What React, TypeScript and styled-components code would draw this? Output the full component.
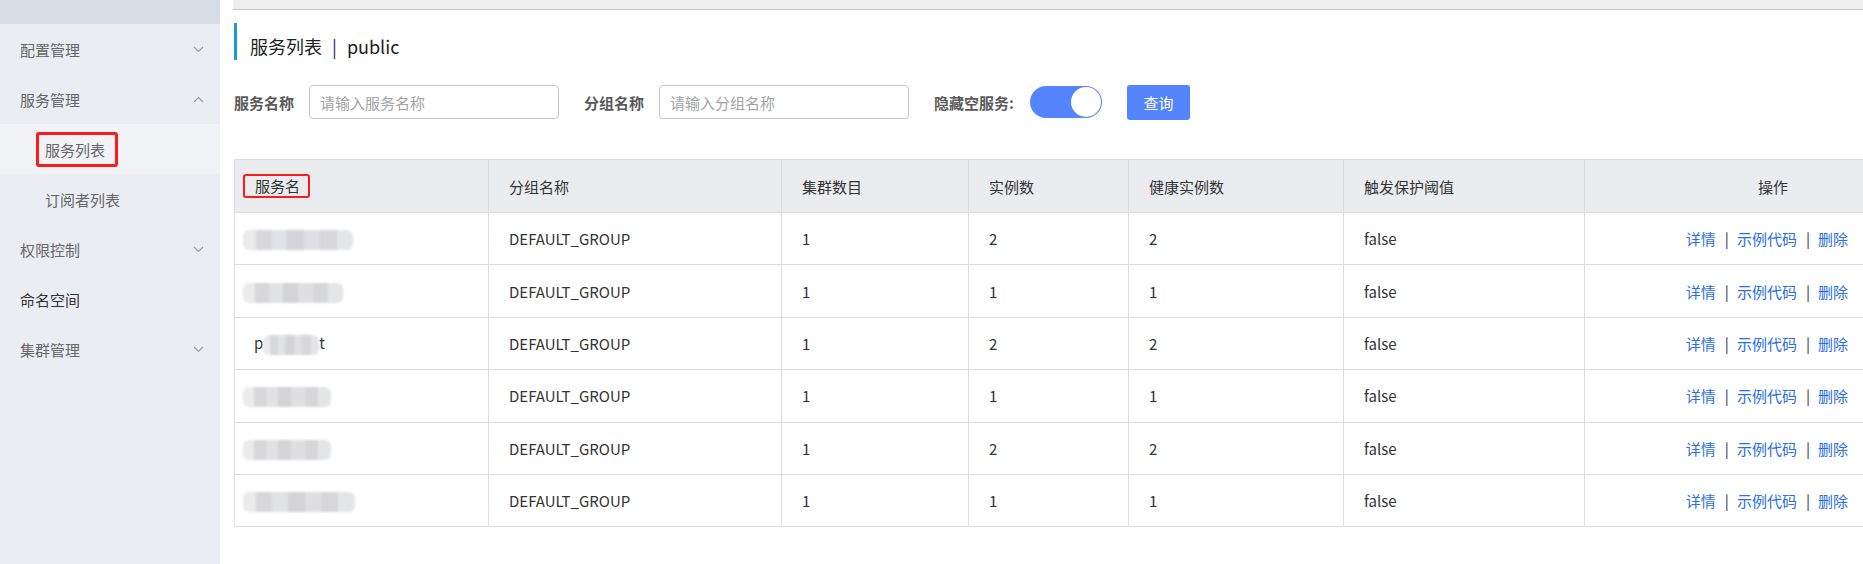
import React from "react";
import styled, { createGlobalStyle } from "styled-components";

const GlobalStyle = createGlobalStyle`
  html, body {
    margin: 0;
    padding: 0;
    background: #fff;
  }
  body {
    font-family: "Noto Sans CJK SC", "Noto Sans", sans-serif;
    color: #333;
  }
  * {
    box-sizing: border-box;
  }
`;

const Layout = styled.div`
  display: flex;
  min-height: 100vh;
  width: 100%;
  overflow: hidden;
`;

const Sidebar = styled.aside`
  width: 220px;
  flex-shrink: 0;
  background: #eaedf1;
`;

const SidebarTop = styled.div`
  height: 24px;
  background: #d8dce4;
`;

const MenuItem = styled.div<{ $sub?: boolean; $active?: boolean; $dark?: boolean }>`
  height: 50px;
  display: flex;
  align-items: center;
  justify-content: space-between;
  padding: ${({ $sub }) => ($sub ? "0 16px 0 36px" : "0 16px 0 20px")};
  font-size: 15px;
  color: ${({ $dark }) => ($dark ? "#333" : "#666")};
  background: ${({ $active }) => ($active ? "#f2f3f7" : "transparent")};
`;

const SubLabel = styled.span`
  padding-left: 9px;
`;

const Marked = styled.span`
  display: inline-block;
  border: 3px solid #ff1a1a;
  border-radius: 3px;
  padding: 0 10px 0 6px;
  line-height: 29px;
`;

const Chevron = ({ up }: { up?: boolean }) => (
  <svg width="11" height="7" viewBox="0 0 11 7">
    <polyline
      points={up ? "1,6 5.5,1.5 10,6" : "1,1 5.5,5.5 10,1"}
      fill="none"
      stroke="#9a9ca3"
      strokeWidth="1.1"
    />
  </svg>
);

const Main = styled.main`
  flex: 1;
  min-width: 0;
  padding-left: 14px;
`;

const TopBand = styled.div`
  height: 10px;
  margin-left: -1px;
  background: #eeeeee;
  border-bottom: 1px solid #c8c8c8;
`;

const Title = styled.h1`
  margin: 13px 0 0;
  height: 37px;
  padding: 9px 0 0 13px;
  border-left: 3px solid #1a9bd7;
  font-size: 18px;
  font-weight: normal;
  line-height: 28px;
  color: #222;
`;

const TitleSep = styled.span`
  margin: 0 10px;
  color: #1b2a6b;
`;

const FilterBar = styled.div`
  display: flex;
  align-items: center;
  height: 34px;
  margin-top: 25px;
`;

const FieldLabel = styled.label<{ $gap?: number }>`
  font-size: 15px;
  font-weight: bold;
  color: #5a5a5a;
  margin-right: ${({ $gap }) => $gap ?? 15}px;
  white-space: nowrap;
`;

const TextInput = styled.input`
  width: 250px;
  height: 34px;
  border: 1px solid #c4c6cf;
  border-radius: 4px;
  padding: 0 10px;
  font-size: 15px;
  font-family: inherit;
  color: #333;
  margin-right: 25px;
  outline: none;
  &::placeholder {
    color: #a3a3a3;
  }
`;

const Switch = styled.div<{ $on: boolean }>`
  position: relative;
  width: 72px;
  height: 32px;
  border-radius: 16px;
  background: ${({ $on }) => ($on ? "#5584ff" : "#e0e0e0")};
  margin-right: 25px;
  &::after {
    content: "";
    position: absolute;
    top: 1px;
    left: ${({ $on }) => ($on ? "41px" : "1px")};
    width: 30px;
    height: 30px;
    border-radius: 50%;
    background: #fff;
  }
`;

const Button = styled.button`
  width: 63px;
  height: 35px;
  border: 0;
  border-radius: 3px;
  background: #5584ff;
  color: #fff;
  font-size: 15px;
  font-family: inherit;
`;

const Table = styled.table`
  margin-top: 40px;
  width: 1629px;
  table-layout: fixed;
  border-collapse: collapse;
  font-size: 15px;
  color: #333;
`;

const Th = styled.th<{ $w: number; $right?: boolean }>`
  width: ${({ $w }) => $w}px;
  height: 53px;
  background: #ebecf0;
  border: 1px solid #dcdee3;
  font-weight: normal;
  text-align: ${({ $right }) => ($right ? "right" : "left")};
  padding: ${({ $right }) => ($right ? "0 75px 0 0" : "0 0 0 20px")};
  white-space: nowrap;
`;

const Td = styled.td<{ $right?: boolean; $pad?: number }>`
  height: 52.4px;
  border: 1px solid #dcdee3;
  text-align: ${({ $right }) => ($right ? "right" : "left")};
  padding: ${({ $right, $pad }) => ($right ? "0 15px 0 0" : `0 0 0 ${$pad ?? 20}px`)};
  white-space: nowrap;
`;

const HeadMark = styled.span`
  display: inline-block;
  margin-left: -12px;
  border: 2px solid #ff1a1a;
  border-radius: 3px;
  padding: 0 8px 0 10px;
  line-height: 20px;
`;

const Mosaic = styled.span<{ $w: number }>`
  display: inline-block;
  vertical-align: middle;
  width: ${({ $w }) => $w}px;
  height: 20px;
  border-radius: 6px;
  background:
    linear-gradient(90deg, #e9e9ea 0 12%, #d4d4d6 12% 26%, #dedfe0 26% 40%, #d0d0d2 40% 55%, #dcdcde 55% 70%, #d3d3d5 70% 85%, #e2e3e5 85% 100%);
  filter: blur(1.2px);
  opacity: 0.9;
`;

const Links = styled.span`
  color: #2a6ee8;
`;

const Sep = styled.span`
  margin: 0 8px 0 9px;
  color: #2b3352;
`;

const columns = [
  { title: "服务名", w: 254 },
  { title: "分组名称", w: 293 },
  { title: "集群数目", w: 187 },
  { title: "实例数", w: 160 },
  { title: "健康实例数", w: 215 },
  { title: "触发保护阈值", w: 241 },
  { title: "操作", w: 279 },
];

type Row = { blur: number; instances: number; healthy: number; prefix?: string; suffix?: string; pad?: number };

const rows: Row[] = [
  { blur: 110, instances: 2, healthy: 2, pad: 8 },
  { blur: 100, instances: 1, healthy: 1, pad: 8 },
  { blur: 56, instances: 2, healthy: 2, prefix: "p", suffix: "t", pad: 19 },
  { blur: 88, instances: 1, healthy: 1, pad: 8 },
  { blur: 88, instances: 2, healthy: 2, pad: 8 },
  { blur: 112, instances: 1, healthy: 1, pad: 8 },
];

const menu = [
  { label: "配置管理", arrow: "down" },
  { label: "服务管理", arrow: "up" },
];

export default function App() {
  return (
    <>
      <GlobalStyle />
      <Layout>
        <Sidebar>
          <SidebarTop />
          {menu.map((m) => (
            <MenuItem key={m.label}>
              {m.label}
              <Chevron up={m.arrow === "up"} />
            </MenuItem>
          ))}
          <MenuItem $sub $active>
            <Marked>服务列表</Marked>
          </MenuItem>
          <MenuItem $sub>
            <SubLabel>订阅者列表</SubLabel>
          </MenuItem>
          <MenuItem>
            权限控制
            <Chevron />
          </MenuItem>
          <MenuItem $dark>命名空间</MenuItem>
          <MenuItem>
            集群管理
            <Chevron />
          </MenuItem>
        </Sidebar>

        <Main>
          <TopBand />
          <Title>
            服务列表<TitleSep>|</TitleSep>public
          </Title>

          <FilterBar>
            <FieldLabel>服务名称</FieldLabel>
            <TextInput placeholder="请输入服务名称" />
            <FieldLabel>分组名称</FieldLabel>
            <TextInput placeholder="请输入分组名称" />
            <FieldLabel $gap={16}>隐藏空服务:</FieldLabel>
            <Switch $on />
            <Button>查询</Button>
          </FilterBar>

          <Table>
            <thead>
              <tr>
                {columns.map((c, i) => (
                  <Th key={c.title} $w={c.w} $right={i === columns.length - 1}>
                    {i === 0 ? <HeadMark>{c.title}</HeadMark> : c.title}
                  </Th>
                ))}
              </tr>
            </thead>
            <tbody>
              {rows.map((r, i) => (
                <tr key={i}>
                  <Td $pad={r.pad}>
                    {r.prefix}
                    <Mosaic $w={r.blur} />
                    {r.suffix}
                  </Td>
                  <Td>DEFAULT_GROUP</Td>
                  <Td>1</Td>
                  <Td>{r.instances}</Td>
                  <Td>{r.healthy}</Td>
                  <Td>false</Td>
                  <Td $right>
                    <Links>
                      详情<Sep>|</Sep>示例代码<Sep>|</Sep>删除
                    </Links>
                  </Td>
                </tr>
              ))}
            </tbody>
          </Table>
        </Main>
      </Layout>
    </>
  );
}
